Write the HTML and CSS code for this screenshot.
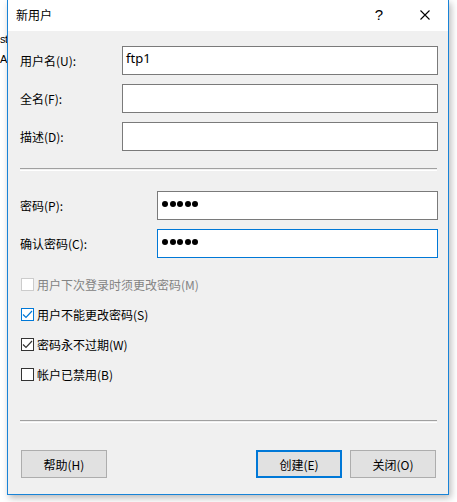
FILE: index.html
```html
<!DOCTYPE html>
<html lang="zh-CN">
<head>
    <meta charset="UTF-8">
    <title>新用户</title>
    <link rel="stylesheet" href="styles.css">
</head>
<body>
    <div class="desk">
        <div class="behind">
            <div class="behind-1">st</div>
            <div class="behind-2">A</div>
        </div>

        <div class="dialog">
            <div class="titlebar">
                <span class="title">新用户</span>
                <span class="help-btn">?</span>
                <span class="close-btn">
                    <svg width="10" height="10" viewBox="0 0 10 10"><path d="M0.5 0.5 L9.5 9.5 M9.5 0.5 L0.5 9.5" stroke="#000" stroke-width="1.1" fill="none"/></svg>
                </span>
            </div>

            <div class="content">
                <div class="fields">
                    <div class="row"><label>用户名(U):</label><div class="box box-wide">ftp1</div></div>
                    <div class="row"><label>全名(F):</label><div class="box box-wide"></div></div>
                    <div class="row"><label>描述(D):</label><div class="box box-wide"></div></div>
                </div>

                <div class="sep"></div>

                <div class="fields pw">
                    <div class="row"><label>密码(P):</label><div class="box box-pw"><span class="dot"></span><span class="dot"></span><span class="dot"></span><span class="dot"></span><span class="dot"></span></div></div>
                    <div class="row"><label>确认密码(C):</label><div class="box box-pw focused"><span class="dot"></span><span class="dot"></span><span class="dot"></span><span class="dot"></span><span class="dot"></span></div></div>
                </div>

                <div class="checks">
                    <div class="check disabled"><span class="cb"></span>用户下次登录时须更改密码(M)</div>
                    <div class="check"><span class="cb hot"><svg width="11" height="11" viewBox="0 0 11 11"><path d="M1 5.5 L4 8.5 L10 2" stroke="#0078d7" stroke-width="1.2" fill="none"/></svg></span>用户不能更改密码(S)</div>
                    <div class="check"><span class="cb"><svg width="11" height="11" viewBox="0 0 11 11"><path d="M1 5.5 L4 8.5 L10 2" stroke="#333" stroke-width="1.2" fill="none"/></svg></span>密码永不过期(W)</div>
                    <div class="check"><span class="cb"></span>帐户已禁用(B)</div>
                </div>

                <div class="sep sep-bottom"></div>

                <div class="buttons">
                    <div class="btn">帮助(H)</div>
                    <div class="spacer"></div>
                    <div class="btn default">创建(E)</div>
                    <div class="btn">关闭(O)</div>
                </div>
            </div>
        </div>
    </div>
</body>
</html>
```

FILE: styles.css
```css
body { margin: 0; background: #fff; font-family: "Noto Sans CJK SC", "Noto Sans", sans-serif; font-size: 12px; color: #000; overflow: hidden; }
.desk { display: flex; width: 457px; height: 502px; }

.behind { width: 7px; overflow: hidden; padding-top: 29px; font-family: "Liberation Sans", sans-serif; font-size: 11px; line-height: 20px; }
.behind-1 { letter-spacing: -0.5px; white-space: nowrap; }

.dialog { width: 440px; height: 494px; border: 1px solid #1883d7; border-top: 0; background: #f0f0f0; box-shadow: 2px 3px 7px rgba(0,0,0,0.28); display: flex; flex-direction: column; }

.titlebar { height: 31px; background: #fff; display: flex; align-items: center; padding-left: 8px; flex-shrink: 0; }
.title { flex: 1; padding-bottom: 2px; }
.help-btn { font-family: "Liberation Sans", sans-serif; font-size: 15px; width: 46px; text-align: center; margin-bottom: 2px; }
.close-btn { width: 46px; height: 30px; display: flex; align-items: center; justify-content: center; padding-bottom: 2px; }

.content { padding: 15px 10px 0 12px; display: flex; flex-direction: column; }

.fields { display: flex; flex-direction: column; gap: 9px; }
.row { display: flex; align-items: center; height: 29px; }
.row label { width: 102px; flex-shrink: 0; }
.pw .row label { width: 137px; }

.box { flex: 1; border: 1px solid #7a7a7a; background: #fff; padding: 3px 0 0 3px; box-sizing: border-box; height: 29px; font-size: 13px; font-family: "Noto Sans", sans-serif; line-height: 17px; }
.box-pw { display: flex; align-items: center; padding: 0 0 4px 4px; }
.box.focused { border-color: #0078d7; }
.dot { width: 6px; height: 6px; border-radius: 50%; background: #000; margin-right: 1.6px; }

.sep { height: 1px; border-top: 1px solid #a0a0a0; border-bottom: 1px solid #fff; margin: 17px 1px 20px 0; }
.sep-bottom { margin: 31px 1px 27px 0; }

.checks { display: flex; flex-direction: column; margin-top: 11px; margin-left: 1px; }
.check { display: flex; align-items: center; height: 30px; gap: 3px; }
.cb { width: 13px; height: 13px; box-sizing: border-box; border: 1px solid #333; background: #fff; display: flex; align-items: center; justify-content: center; }
.cb.hot { border-color: #0078d7; }
.check.disabled { color: #838383; }
.check.disabled .cb { border-color: #cccccc; }

.buttons { display: flex; gap: 8px; padding: 0 2px 0 1px; }
.spacer { flex: 1; }
.btn { width: 86px; height: 28px; box-sizing: border-box; border: 1px solid #adadad; background: #e1e1e1; display: flex; align-items: center; justify-content: center; }
.btn.default { border: 2px solid #0078d7; }
```
